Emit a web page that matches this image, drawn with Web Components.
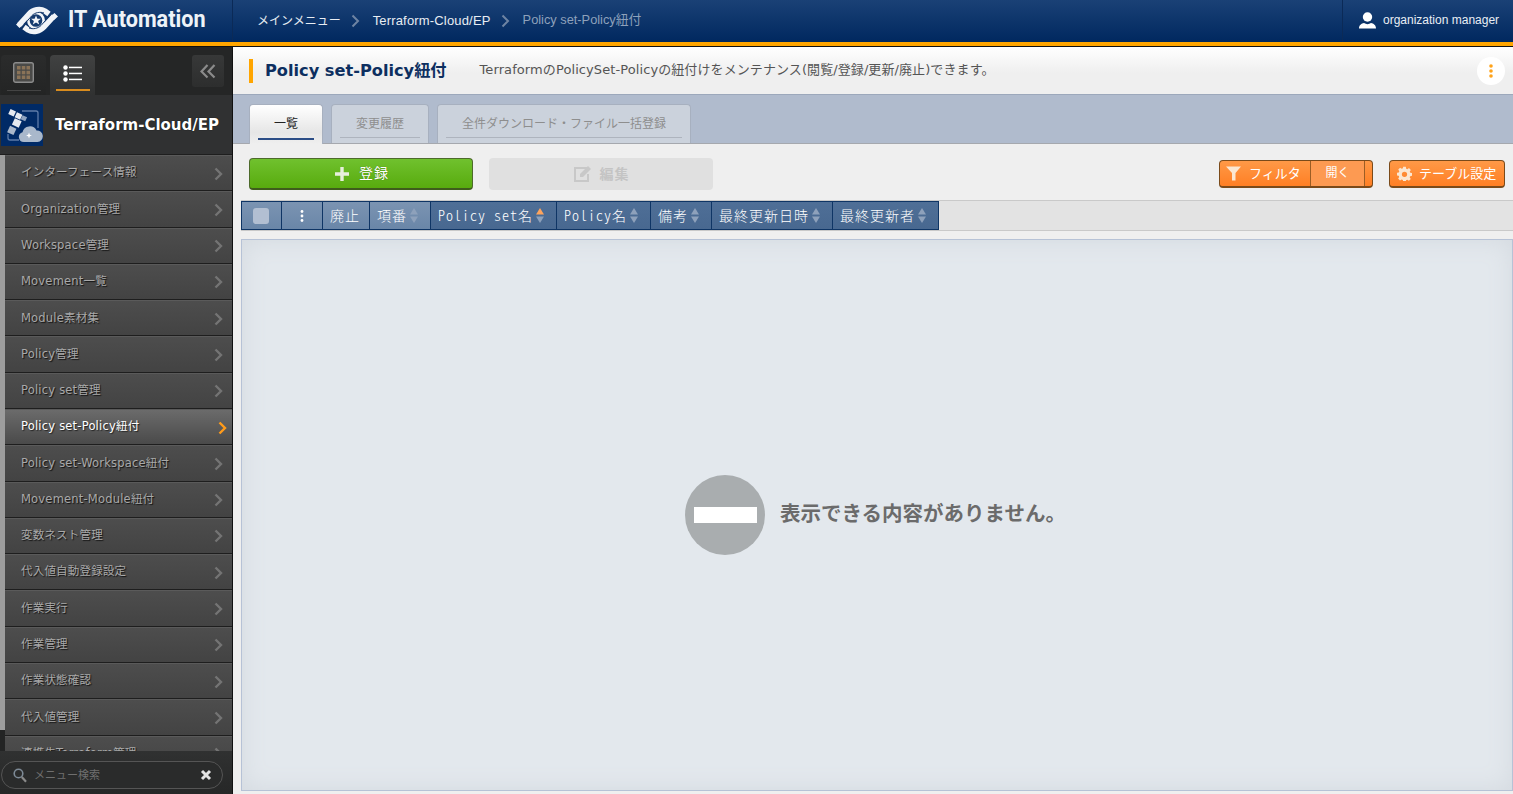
<!DOCTYPE html>
<html lang="ja"><head><meta charset="utf-8"><title>IT Automation</title>
<style>
html,body{margin:0;padding:0;height:100%;overflow:hidden;background:#efefef}
body{font-family:"Liberation Sans","Noto Sans CJK JP",sans-serif;width:1513px;height:794px}
ita-app{display:flex;flex-direction:column;height:794px}
</style></head><body>
<ita-app>
  <ita-header slot="header"></ita-header>
  <ita-sidebar slot="side"></ita-sidebar>
  <ita-main slot="main"></ita-main>
</ita-app>
<script>
const JP='"Noto Sans CJK JP"';
function def(name,html,init){customElements.define(name,class extends HTMLElement{constructor(){super();this.attachShadow({mode:'open'}).innerHTML=html;}connectedCallback(){init&&init(this)}})}
const chev=(c,w=2)=>`<svg width="9" height="14" viewBox="0 0 9 14"><path d="M1.500 1.500 7 7l-5.500 5.500" fill="none" stroke="${c}" stroke-width="${w}"/></svg>`;

def('ita-app',`<style>:host{display:flex;flex-direction:column;height:794px}
.body{flex:1;display:flex;min-height:0}</style>
<slot name="header"></slot><div class="body"><slot name="side"></slot><slot name="main"></slot></div>`);

def('ita-header',`<style>
:host{display:block;height:47px;box-sizing:border-box;border-bottom:1px solid #111;background:#111;flex:none}
.bar{height:42px;display:flex;background:linear-gradient(#1a4176,#00285f);color:#fff;border-bottom:4px solid #ffa500}
.logo{width:233px;box-sizing:border-box;border-right:1px solid #0b2a57;display:flex;align-items:center;padding-left:16px;gap:10px}
.logo b{font:700 24px/1 Roboto,"Liberation Sans",sans-serif;color:#eef3f8;display:inline-block;transform:scaleX(.9);transform-origin:0 50%;white-space:nowrap;margin-top:-4px}
.logo svg{margin-top:-1px}
.crumbs{flex:1;display:flex;align-items:center;padding-left:24px;font:13px/1 "Liberation Sans",${JP},sans-serif;color:#e8edf3;margin-top:-1px;white-space:nowrap;letter-spacing:.17px}
.crumbs svg{margin:0 13px 0 10px}
.crumbs .j{font-size:12px;letter-spacing:0}
.crumbs .c{color:#8ea1bb;font-size:12.800px;letter-spacing:0}
.user{width:171px;box-sizing:border-box;border-left:1px solid #0b2a57;display:flex;align-items:center;padding:0 0 2px 16px;gap:7px;font:12px/1 "Liberation Sans",sans-serif;color:#e9eef4;white-space:nowrap}
</style>
<div class="bar">
<div class="logo"><svg width="42" height="29" viewBox="0 0 42 29">
<g fill="none" stroke="#f1f4f8" stroke-width="5.500"><path d="M3 19 13 8C17 3.500 24 2 29 5l4 3"/><path d="M38 10 28 21C24 25.500 17 27 12 24l-4-3"/></g>
<circle cx="20" cy="14.500" r="9" fill="#f1f4f8"/><circle cx="20" cy="14.500" r="6.300" fill="#143a6e"/>
<path d="m20 9.500 1.400 3.300h3.600l-2.900 2.200 1.100 3.500-3.200-2.100-3.200 2.100 1.100-3.500-2.900-2.200h3.600z" fill="#f1f4f8"/>
<g fill="none" stroke="#15396c" stroke-width="1"><path d="M5 22 16 9.500c3-3 8-4 12-2.500"/><path d="M36 7 25 19.500c-3 3-8 4-12 2.500"/></g>
<path d="M0 18.500l4-3.500 3.500 3.500-4 3.500zM34.500 10.500l4-3.500 3.500 3.500-4 3.500z" fill="#f1f4f8"/></svg><b>IT Automation</b></div>
<div class="crumbs"><span class="j">メインメニュー</span>${chev('#6e84a3')}<span>Terraform-Cloud/EP</span>${chev('#6e84a3')}<span class="c">Policy set-Policy紐付</span></div>
<div class="user"><svg width="17" height="17" viewBox="0 0 17 17"><circle cx="8.500" cy="5" r="4.700" fill="#fff"/><path d="M0 16.500c0-3.500 2.500-5 5-5.500 2 1.500 5 1.500 7 0 2.500.5 5 2 5 5.500z" fill="#fff"/></svg><span>organization manager</span></div>
</div>`);

def('ita-side-tabs',`<style>
:host{display:flex;height:48px;box-sizing:border-box;background:#252626;padding:8px 8px 0 1px;gap:4px;position:relative;flex:none}
.t{width:45px;height:40px;box-sizing:border-box;border-radius:4px 4px 0 0;background:linear-gradient(#2b2c2c,#232424);display:flex;flex-direction:column;align-items:center;padding-top:7px}
.t.on{background:linear-gradient(#414242,#303131);padding-top:10px}
.t i{display:block;width:34px;height:0;margin-top:auto;margin-bottom:4px;border-top:1px solid #444}
.t.on i{border-top:2px solid #d98c1e}
.col{margin-left:auto;width:32px;height:32px;margin-top:0;border-radius:3px;background:linear-gradient(#373838,#2d2e2e);display:flex;align-items:center;justify-content:center}
</style>
<div class="t"><svg width="21" height="21" viewBox="0 0 21 21"><rect x=".7" y=".7" width="19.600" height="19.600" rx="2" fill="#4a4a48" stroke="#8c8c8c" stroke-width="1.400"/><g fill="#8a7358"><rect x="4" y="4" width="3.500" height="3.500"/><rect x="8.800" y="4" width="3.500" height="3.500"/><rect x="13.500" y="4" width="3.500" height="3.500"/><rect x="4" y="8.800" width="3.500" height="3.500"/><rect x="8.800" y="8.800" width="3.500" height="3.500"/><rect x="13.500" y="8.800" width="3.500" height="3.500"/><rect x="4" y="13.500" width="3.500" height="3.500"/><rect x="8.800" y="13.500" width="3.500" height="3.500"/><rect x="13.500" y="13.500" width="3.500" height="3.500"/></g></svg><i></i></div>
<div class="t on"><svg width="19" height="17" viewBox="0 0 19 17"><g fill="#fff"><circle cx="2.500" cy="2.500" r="2.200"/><circle cx="2.500" cy="8.500" r="2.200"/><circle cx="2.500" cy="14.500" r="2.200"/><rect x="6" y="1.700" width="13" height="1.500"/><rect x="6" y="7.700" width="13" height="1.500"/><rect x="6" y="13.700" width="13" height="1.500"/></g></svg><i></i></div>
<div class="col"><svg width="16" height="15" viewBox="0 0 16 15"><path d="M7.500 1 1.500 7.500l6 6M14.500 1l-6 6.500 6 6" fill="none" stroke="#8b8b8b" stroke-width="2.200"/></svg></div>`);

def('ita-menu-title',`<style>
:host{display:flex;height:60px;background:#303132;align-items:center;flex:none;padding-left:1px;box-sizing:border-box;border-bottom:1px solid #1e1e1e}
.t{margin-left:12px;font:700 15px/1 "DejaVu Sans",${JP},sans-serif;color:#fff;white-space:nowrap;text-shadow:0 0 1px #000;margin-top:1px}
svg{margin-top:1px}
</style>
<svg width="42" height="42" viewBox="0 0 42 42"><rect width="42" height="42" fill="#002a66"/>
<g fill="none" stroke="#5d7ba8" stroke-width="1.300"><path d="M21 7h14a2 2 0 0 1 2 2v15"/><path d="M7 30v4a2 2 0 0 0 2 2h9"/></g>
<g fill="#e6eaf0"><rect x="8" y="6" width="6" height="5.500" transform="rotate(25 11 9)"/><rect x="14.500" y="9" width="6" height="5.500" transform="rotate(25 17 12)"/><rect x="12" y="15.500" width="7.500" height="7" transform="rotate(25 16 19)"/></g>
<rect x="20.500" y="12" width="5" height="4.500" transform="rotate(25 23 14)" fill="#8fa3bf"/>
<rect x="7.500" y="23" width="7" height="7" transform="rotate(25 11 26)" fill="#aab8cb"/>
<path d="M23 38a5 5 0 0 1-1.500-9.800 7.500 7.500 0 0 1 14-1.800 5.800 5.800 0 0 1 1 11.600z" fill="#a9b8cb"/>
<path d="M28 28.500l.8 2.200 2.200.8-2.200.8-.8 2.200-.8-2.200-2.200-.8 2.200-.8z" fill="#fff"/></svg>
<div class="t">Terraform-Cloud/EP</div>`);

def('ita-menu-item',`<style>
:host{display:flex;height:36.290px;box-sizing:border-box;align-items:center;justify-content:space-between;padding:0 9px 0 16px;background:linear-gradient(#4d4d4d,#434343);border-top:1px solid #5a5a5a;border-bottom:1px solid #1e1e1e;flex:none;font:11.500px/1 "DejaVu Sans",${JP},sans-serif;color:#a9a9a9;text-shadow:1px 1px 1px #111;white-space:nowrap;letter-spacing:.2px}
:host([on]){background:linear-gradient(#6b6b6b,#4a4a4a);color:#fff;text-shadow:1px 1px 1px #222;padding-right:5px}
</style><slot></slot><span id="c" style="display:flex;margin-top:1px"></span>`,el=>{el.shadowRoot.getElementById('c').innerHTML=chev(el.hasAttribute('on')?'#ff9b1a':'#747474',2.4)});

def('ita-search',`<style>
:host{display:block;height:43px;box-sizing:border-box;padding:10px 9px 0 1px;background:linear-gradient(#303131,#262727);flex:none}
.b{height:28px;box-sizing:border-box;border:1px solid #555;border-radius:14px;background:#2a2b2b;display:flex;align-items:center;padding-left:11px;font:11px/1 "Liberation Sans",${JP},sans-serif;color:#6f6f6f}
.b span{margin-left:7px;flex:1}
.x{margin-right:10px}
</style><div class="b"><svg width="14" height="15" viewBox="0 0 14 15"><circle cx="5.500" cy="5.500" r="4.300" fill="none" stroke="#7d8a96" stroke-width="1.600"/><path d="m8.800 9 4.200 4.700" stroke="#8a8a8a" stroke-width="2.200"/></svg><span>メニュー検索</span><svg class="x" width="12" height="12" viewBox="0 0 12 12"><path d="m2 2 8 8M10 2l-8 8" stroke="#e4e4e4" stroke-width="3"/></svg></div>`);

const items=['インターフェース情報','Organization管理','Workspace管理','Movement一覧','Module素材集','Policy管理','Policy set管理','Policy set-Policy紐付','Policy set-Workspace紐付','Movement-Module紐付','変数ネスト管理','代入値自動登録設定','作業実行','作業管理','作業状態確認','代入値管理','連携先Terraform管理'];
def('ita-sidebar',`<style>
:host{display:flex;flex-direction:column;width:233px;height:747px;flex:none;background:#1f2020;box-sizing:border-box;border-right:1px solid #111}
.list{flex:1;display:flex;min-height:0;overflow:hidden;background:#232424}
.sb{width:5px;flex:none;align-self:flex-start;height:575px;background:#9d9d9d}
.m{flex:1;display:flex;flex-direction:column;overflow:hidden;min-width:0}
</style><ita-side-tabs></ita-side-tabs><ita-menu-title></ita-menu-title>
<div class="list"><div class="sb"></div><div class="m">${items.map((t,i)=>`<ita-menu-item${i==7?' on':''}>${t}</ita-menu-item>`).join('')}</div></div>
<ita-search></ita-search>`);

def('ita-page-head',`<style>
:host{display:flex;height:47px;align-items:center;background:linear-gradient(#fff,#efefef 55%);flex:none;padding:0 8px 0 16px;position:relative}
.m{width:4px;height:24px;background:#ffa500;flex:none}
h1{margin:2px 0 0 12px;font:700 16.200px/1 "DejaVu Sans",${JP},sans-serif;color:#0d2f60;white-space:nowrap}
p{margin:0 0 0 33px;font:13px/1 "DejaVu Sans",${JP},sans-serif;color:#555;flex:1;white-space:nowrap;position:relative;top:-1px;letter-spacing:.09px}
.d{width:28px;height:28px;border-radius:50%;background:#fff;display:flex;align-items:center;justify-content:center}
</style><div class="m"></div><h1>Policy set-Policy紐付</h1><p>TerraformのPolicySet-Policyの紐付けをメンテナンス(閲覧/登録/更新/廃止)できます。</p>
<div class="d"><svg width="4" height="14" viewBox="0 0 4 14"><g fill="#ffa31a"><circle cx="2" cy="2" r="1.800"/><circle cx="2" cy="7" r="1.800"/><circle cx="2" cy="12" r="1.800"/></g></svg></div>`);

def('ita-tabs',`<style>
:host{display:flex;height:50px;box-sizing:border-box;background:#b0bbcd;padding:10px 0 0 16px;gap:8px;flex:none;align-items:flex-end;border-top:1px solid #9ca8bb;border-bottom:1px solid #a5a8ae}
.t{height:39px;box-sizing:border-box;border:1px solid #a7b0bf;border-bottom:0;border-radius:4px 4px 0 0;background:#cbd2dc;padding:0 8px;font:12px/1 ${JP},sans-serif;color:#8e8e8e;display:flex;flex-direction:column;align-items:center}
.t span{padding:0 16px;display:flex;align-items:center;border-bottom:1px solid #aeb4be;margin-top:3px;height:29px;white-space:nowrap}
.t.on{background:linear-gradient(#fff,#e6e6e6 70%,#efefef);color:#222;height:40px;margin-bottom:-1px;width:74px;padding:0}
.t.on span{border-bottom:2px solid #2b4d86;width:56px;padding:0;justify-content:center;margin-top:3px;height:30px}
</style><div class="t on"><span>一覧</span></div><div class="t"><span>変更履歴</span></div><div class="t"><span>全件ダウンロード・ファイル一括登録</span></div>`);

const btnBase=`box-sizing:border-box;display:flex;align-items:center;justify-content:center;white-space:nowrap;font:14px/1 ${JP},sans-serif;`;
def('ita-toolbar',`<style>
:host{display:flex;height:56px;box-sizing:border-box;padding:14px 8px 0 16px;flex:none;align-items:flex-start}
.add{${btnBase}width:224px;height:32px;padding-left:2px;border:1px solid #4d6a2b;border-bottom:2px solid #3f5d1c;border-radius:4px;background:linear-gradient(#70c12e,#58ab0e);color:#fff;gap:10px;letter-spacing:1px;text-shadow:0 0 1px #3a6b00}
.add span,.edit span{padding-bottom:3px}
.edit{${btnBase}width:224px;height:32px;margin-left:16px;background:#e0e0e0;border-radius:4px;color:#c4c4c4;gap:8px;font-weight:700;letter-spacing:1px}
.sp{flex:1}
.or{${btnBase}height:28px;border:1px solid #7a4a1a;border-bottom:2px solid #7a4a1a;border-radius:4px;background:linear-gradient(#ff9947,#ff7f24);color:#fff;font-size:13px;margin-top:2px}
.or span,.o{padding-bottom:3px}
.f{width:154px;margin-right:16px;padding:0;justify-content:flex-start;overflow:hidden}
.f .l{flex:none;width:90px;display:flex;align-items:center;gap:8px;padding-left:6px;box-sizing:border-box}
.f .o{flex:none;width:55px;height:100%;background:#fd9a52;border:solid #9b5d25;border-width:0 1px;display:flex;align-items:center;justify-content:center;box-sizing:border-box;font-size:12px}
.s{width:116px;gap:7px;justify-content:flex-start;padding-left:7px}
</style>
<div class="add"><svg width="14" height="14" viewBox="0 0 14 14"><path d="M7 0v14M0 7h14" stroke="#e6efdc" stroke-width="3.400"/></svg><span>登録</span></div>
<div class="edit"><svg width="19" height="18" viewBox="0 0 19 18"><path d="M14 3H2v13h13V9" fill="none" stroke="#c8c8c8" stroke-width="2"/><path d="M7 9l8-8 3 3-8 8H7z" fill="#c8c8c8"/></svg><span>編集</span></div>
<div class="sp"></div>
<div class="or f"><div class="l"><svg width="15" height="15" viewBox="0 0 15 15"><path d="M0 .5h15L9.500 7v7.500h-3.500V7z" fill="#fbe7d2"/></svg><span>フィルタ</span></div><div class="o">開く</div></div>
<div class="or s"><svg width="15" height="15" viewBox="0 0 15 15"><path fill="#fbe7d2" fill-rule="evenodd" d="M6 0h3l.4 2.100 1.400.6 1.800-1.200 2.100 2.100-1.200 1.800.6 1.400 2 .4v3l-2.100.4-.6 1.400 1.200 1.800-2.100 2.100-1.800-1.200-1.400.6L9 17H6l-.4-2.100-1.400-.6-1.800 1.200L.300 13.400l1.200-1.800-.6-1.400L-1 9.800v-3l2-.4.600-1.400L.4 3.200 2.500 1.100l1.800 1.200 1.400-.6zM7.500 5.500a3 3 0 1 0 0 6 3 3 0 0 0 0-6z" transform="translate(.9 .8) scale(.88)"/></svg><span>テーブル設定</span></div>`);

const sortI=a=>`<svg width="8" height="15" viewBox="0 0 8 15"><path d="M4 0 8 6.500H0z" fill="${a?'#ffa45c':'#8ea1bb'}"/><path d="M4 15 0 8.500h8z" fill="#8ea1bb"/></svg>`;
const th=(t,w,o={})=>`<div class="th${o.l?' l':''}" style="width:${w}px"><span>${t}</span>${o.s?sortI(o.a):''}</div>`;
def('ita-table-head',`<style>
:host{display:block;height:31px;box-sizing:border-box;margin:0 0 0 8px;background:#e3e3e3;border:solid #c9c9c9;border-width:1px 0;flex:none}
.r{display:flex;height:29px;box-sizing:border-box;width:fit-content;border:solid #0f3565;border-width:1px 0 1px 1px}
.th{box-sizing:border-box;display:flex;align-items:center;justify-content:flex-start;padding-left:7px;gap:3px;color:#fff;height:27px;border-right:1px solid #0f3565;font:300 14px/1 ${JP},sans-serif;font-feature-settings:"hwid" 1;letter-spacing:1px;white-space:nowrap;background:linear-gradient(#4f6f97,#486890)}
.th span{padding-bottom:2px}
.th.l{background:linear-gradient(#7b94b2,#6a86a8)}
.ck{width:16px;height:16px;border-radius:3px;background:#b2bfd2;margin-left:4px}
</style><div class="r">
<div class="th l" style="width:40px"><div class="ck"></div></div>
<div class="th l" style="width:41px;justify-content:center;padding:0"><svg width="4" height="12" viewBox="0 0 4 12"><g fill="#fff"><circle cx="2" cy="1.500" r="1.400"/><circle cx="2" cy="6" r="1.400"/><circle cx="2" cy="10.500" r="1.400"/></g></svg></div>
${th('廃止',47,{l:1})}${th('項番',61,{l:1,s:1})}${th('Policy set名',126,{s:1,a:1})}${th('Policy名',94,{s:1})}${th('備考',61,{s:1})}${th('最終更新日時',121,{s:1})}${th('最終更新者',106,{s:1})}
</div>`);

def('ita-empty',`<style>
:host{flex:1;display:flex;align-items:center;justify-content:center;margin:8px 0 3px 8px;min-height:0;box-sizing:border-box;border:1px solid #b6c2d6;background:#e3e8ed;box-shadow:inset 0 0 24px #d3d9df;gap:15px;padding-right:3px}
.i{width:80px;height:80px;border-radius:50%;background:#a9adaf;display:flex;align-items:center;justify-content:center}
.i b{display:block;width:63px;height:16px;background:#fff}
span{font:700 20.500px/1 "Noto Sans CJK JP",sans-serif;color:#6b6b6b;white-space:nowrap;padding-bottom:5px}
</style><div class="i"><b></b></div><span>表示できる内容がありません。</span>`);

def('ita-main',`<style>
:host{flex:1;display:flex;flex-direction:column;min-width:0;height:747px;background:#efefef}
</style><ita-page-head></ita-page-head><ita-tabs></ita-tabs><ita-toolbar></ita-toolbar><ita-table-head></ita-table-head><ita-empty></ita-empty>`);
</script>
</body></html>
